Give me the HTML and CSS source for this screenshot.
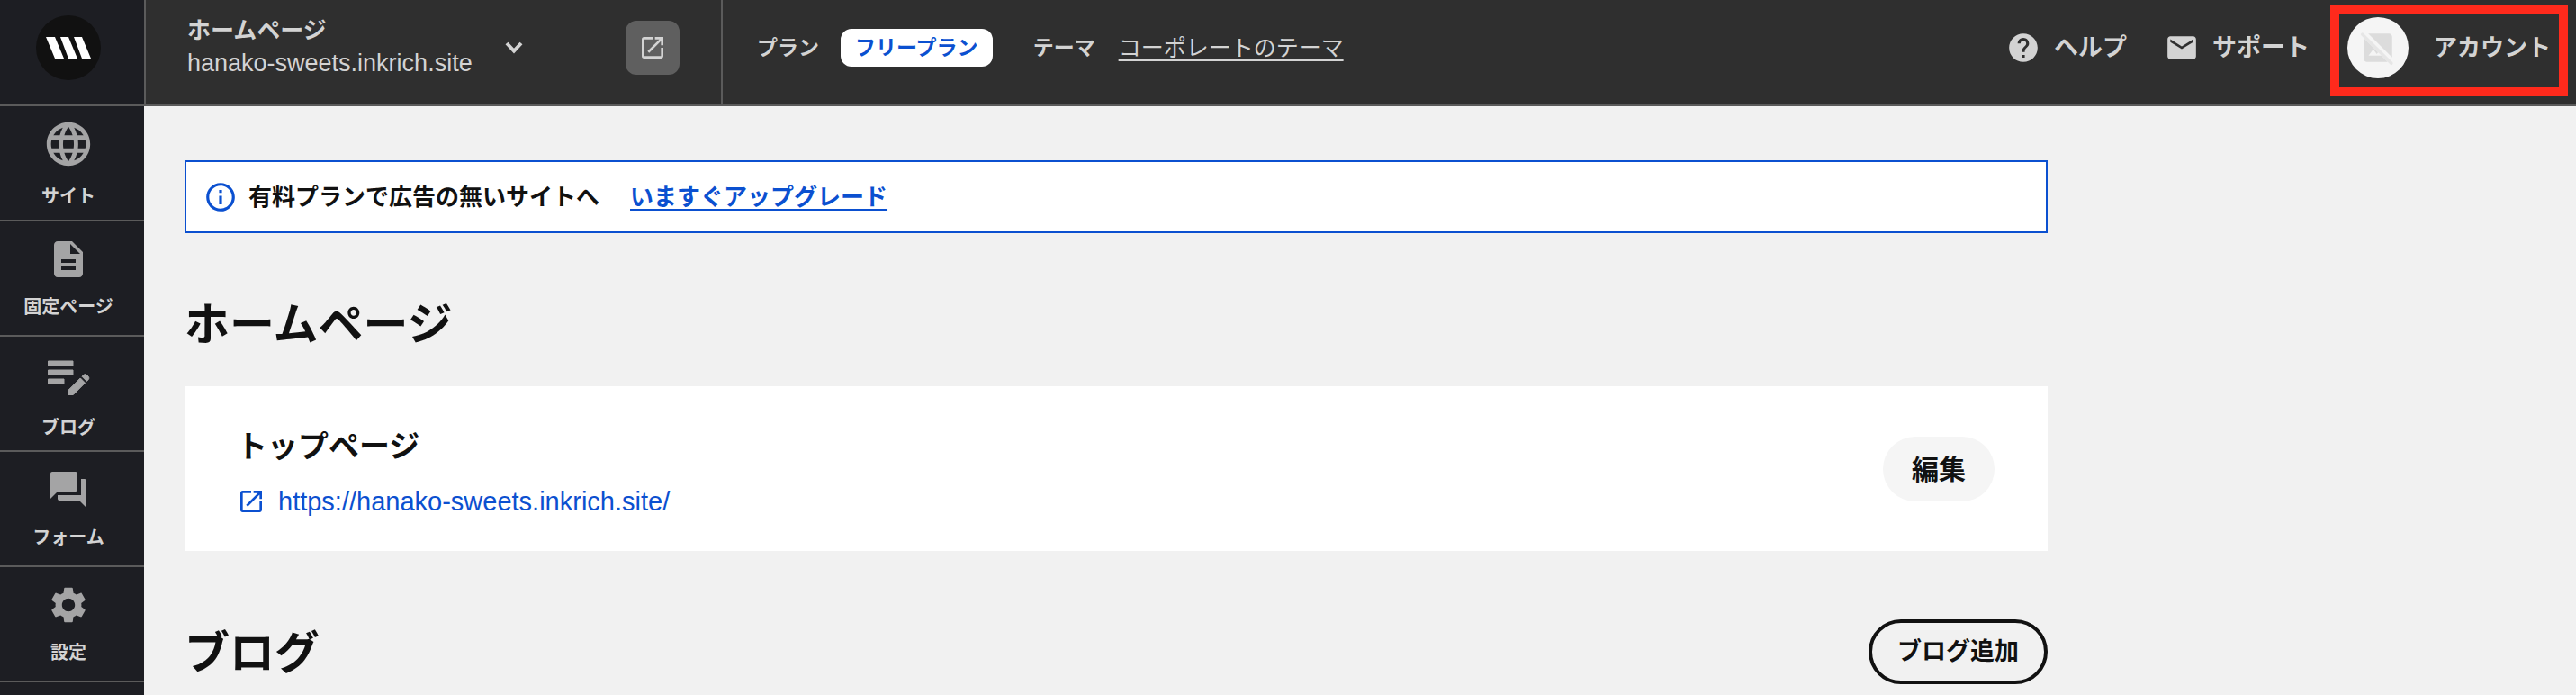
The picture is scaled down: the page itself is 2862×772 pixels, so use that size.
FILE: index.html
```html
<!DOCTYPE html>
<html lang="ja">
<head>
    <meta charset="UTF-8">
    <meta name="viewport" content="width=device-width, initial-scale=1.0">
    <title>ホームページ</title>
    <link rel="stylesheet" href="styles.css">
</head>
<body>
    <div class="layout">
        <nav class="sidebar">
            <a class="logo" href="#" aria-label="ダッシュボード">
                <svg width="72" height="72" viewBox="0 0 72 72">
                    <circle cx="36" cy="36" r="36" fill="#111"/>
                    <path fill="#fff" d="M11 24h10l10 24H21zM27 24h9l10 24H36zM42 24h9l10 24H51z"/>
                </svg>
            </a>
            <a class="nav-item" href="#">
                <svg width="58" height="58" viewBox="0 0 24 24"><path d="M11.99 2C6.47 2 2 6.48 2 12s4.47 10 9.99 10C17.52 22 22 17.52 22 12S17.52 2 11.99 2zm6.93 6h-2.95a15.65 15.65 0 0 0-1.38-3.56A8.03 8.03 0 0 1 18.92 8zM12 4.04c.83 1.2 1.48 2.53 1.91 3.96h-3.82c.43-1.43 1.08-2.76 1.91-3.96zM4.26 14C4.1 13.36 4 12.69 4 12s.1-1.36.26-2h3.38c-.08.66-.14 1.32-.14 2s.06 1.34.14 2H4.26zm.82 2h2.95c.32 1.25.78 2.45 1.38 3.56A7.987 7.987 0 0 1 5.08 16zm2.95-8H5.08a7.987 7.987 0 0 1 4.33-3.56A15.65 15.65 0 0 0 8.03 8zM12 19.96c-.83-1.2-1.48-2.53-1.91-3.96h3.82c-.43 1.43-1.08 2.76-1.91 3.96zM14.34 14H9.66c-.09-.66-.16-1.32-.16-2s.07-1.35.16-2h4.68c.09.65.16 1.32.16 2s-.07 1.34-.16 2zm.25 5.56c.6-1.11 1.06-2.31 1.38-3.56h2.95a8.03 8.03 0 0 1-4.33 3.56zM16.36 14c.08-.66.14-1.32.14-2s-.06-1.34-.14-2h3.38c.16.64.26 1.31.26 2s-.1 1.36-.26 2h-3.38z"/></svg>
                <span>サイト</span>
            </a>
            <a class="nav-item" href="#">
                <svg width="48" height="48" viewBox="0 0 24 24"><path d="M14 2H6c-1.1 0-2 .9-2 2v16c0 1.1.9 2 2 2h12c1.1 0 2-.9 2-2V8l-6-6zm2 16H8v-2h8v2zm0-4H8v-2h8v2zm-3-5V3.5L18.5 9H13z"/></svg>
                <span>固定ページ</span>
            </a>
            <a class="nav-item" href="#">
                <svg width="60" height="60" viewBox="0 0 24 24"><path d="M3 10h11v2H3v-2zm0-2h11V6H3v2zm0 8h7v-2H3v2zm15.01-3.13.71-.71a.996.996 0 0 1 1.41 0l.71.71c.39.39.39 1.02 0 1.41l-.71.71-2.12-2.12zm-.71.71-5.3 5.3V21h2.12l5.3-5.3-2.12-2.12z" stroke="currentColor" stroke-width=".4"/></svg>
                <span>ブログ</span>
            </a>
            <a class="nav-item" href="#">
                <svg width="48" height="48" viewBox="0 0 24 24"><path d="M21 6h-2v9H6v2c0 .55.45 1 1 1h11l4 4V7c0-.55-.45-1-1-1zm-4 6V3c0-.55-.45-1-1-1H3c-.55 0-1 .45-1 1v14l4-4h10c.55 0 1-.45 1-1z"/></svg>
                <span>フォーム</span>
            </a>
            <a class="nav-item" href="#">
                <svg width="48" height="48" viewBox="0 0 24 24"><path d="M19.14 12.94c.04-.3.06-.61.06-.94 0-.32-.02-.64-.07-.94l2.03-1.58c.18-.14.23-.41.12-.61l-1.92-3.32c-.12-.22-.37-.29-.59-.22l-2.39.96c-.5-.38-1.03-.7-1.62-.94l-.36-2.54c-.04-.24-.24-.41-.48-.41h-3.84c-.24 0-.43.17-.47.41l-.36 2.54c-.59.24-1.13.57-1.62.94l-2.39-.96c-.22-.08-.47 0-.59.22L2.74 8.87c-.12.21-.08.47.12.61l2.03 1.58c-.05.3-.09.63-.09.94s.02.64.07.94l-2.03 1.58c-.18.14-.23.41-.12.61l1.92 3.32c.12.22.37.29.59.22l2.39-.96c.5.38 1.03.7 1.62.94l.36 2.54c.05.24.24.41.48.41h3.84c.24 0 .44-.17.47-.41l.36-2.54c.59-.24 1.13-.56 1.62-.94l2.39.96c.22.08.47 0 .59-.22l1.92-3.32c.12-.22.07-.47-.12-.61l-2.01-1.58zM12 15.6c-1.98 0-3.6-1.62-3.6-3.6s1.62-3.6 3.6-3.6 3.6 1.62 3.6 3.6-1.62 3.6-3.6 3.6z"/></svg>
                <span>設定</span>
            </a>
        </nav>

        <div class="page">
            <header class="topbar">
                <div class="site">
                    <button class="site-select" type="button">
                        <span class="site-text">
                            <span class="site-name">ホームページ</span>
                            <span class="site-url">hanako-sweets.inkrich.site</span>
                        </span>
                        <svg width="20" height="14" viewBox="0 0 20 14"><path d="M2 2l8 8.5L18 2" stroke="currentColor" stroke-width="4"/></svg>
                    </button>
                    <button class="open-site" type="button" aria-label="サイトを開く">
                        <svg width="32" height="32" viewBox="0 0 24 24"><path d="M19 19H5V5h7V3H5a2 2 0 0 0-2 2v14a2 2 0 0 0 2 2h14c1.1 0 2-.9 2-2v-7h-2v7zM14 3v2h3.59l-9.83 9.83 1.41 1.41L19 6.41V10h2V3h-7z"/></svg>
                    </button>
                </div>
                <div class="plan">
                    <span class="plan-label">プラン</span>
                    <a class="plan-badge" href="#">フリープラン</a>
                    <span class="plan-label">テーマ</span>
                    <a class="theme-link" href="#">コーポレートのテーマ</a>
                </div>
                <div class="tools">
                    <a class="tool" href="#">
                        <svg width="38" height="38" viewBox="0 0 24 24"><path d="M12 2C6.48 2 2 6.48 2 12s4.48 10 10 10 10-4.48 10-10S17.52 2 12 2zm1 17h-2v-2h2v2zm2.07-7.75-.9.92C13.45 12.9 13 13.5 13 15h-2v-.5c0-1.1.45-2.1 1.17-2.83l1.24-1.26c.37-.36.59-.86.59-1.41 0-1.1-.9-2-2-2s-2 .9-2 2H8c0-2.21 1.79-4 4-4s4 1.79 4 4c0 .88-.36 1.68-.93 2.25z"/></svg>
                        <span class="tool-label">ヘルプ</span>
                    </a>
                    <a class="tool" href="#">
                        <svg width="38" height="38" viewBox="0 0 24 24"><path d="M20 4H4c-1.1 0-1.99.9-1.99 2L2 18c0 1.1.9 2 2 2h16c1.1 0 2-.9 2-2V6c0-1.1-.9-2-2-2zm0 4-8 5-8-5V6l8 5 8-5v2z"/></svg>
                        <span class="tool-label">サポート</span>
                    </a>
                    <a class="account" href="#">
                        <span class="avatar">
                            <svg width="42" height="42" viewBox="0 0 24 24">
                                <path d="M21 5c0-1.1-.9-2-2-2H5.83L21 18.17V5zM3 5.83V19c0 1.1.9 2 2 2h13.17L3 5.83zM6 17l3-4 2.25 3 .82-1.1 2.1 2.1H6z"/>
                                <path d="M2.1 3.5l18.4 18.4" stroke="#e6e6e6" stroke-width="2" stroke-linecap="round"/>
                            </svg>
                        </span>
                        <span class="tool-label">アカウント</span>
                    </a>
                </div>
            </header>

            <main class="content">
                <div class="notice">
                    <svg width="38" height="38" viewBox="0 0 24 24"><path d="M11 7h2v2h-2V7zm0 4h2v6h-2v-6zm1-9C6.48 2 2 6.48 2 12s4.48 10 10 10 10-4.48 10-10S17.52 2 12 2zm0 18c-4.41 0-8-3.59-8-8s3.59-8 8-8 8 3.59 8 8-3.59 8-8 8z"/></svg>
                    <span>有料プランで広告の無いサイトへ</span>
                    <a href="#">いますぐアップグレード</a>
                </div>

                <div class="section-head">
                    <h1>ホームページ</h1>
                </div>
                <section class="card">
                    <div>
                        <h2>トップページ</h2>
                        <a class="card-link" href="#">
                            <svg width="32" height="32" viewBox="0 0 24 24"><path d="M19 19H5V5h7V3H5a2 2 0 0 0-2 2v14a2 2 0 0 0 2 2h14c1.1 0 2-.9 2-2v-7h-2v7zM14 3v2h3.59l-9.83 9.83 1.41 1.41L19 6.41V10h2V3h-7z"/></svg>
                            <span>https://hanako-sweets.inkrich.site/</span>
                        </a>
                    </div>
                    <button class="btn" type="button">編集</button>
                </section>

                <div class="section-head">
                    <h1>ブログ</h1>
                    <button class="btn btn-outline" type="button">ブログ追加</button>
                </div>
            </main>
        </div>
    </div>
</body>
</html>
```

FILE: styles.css
```css
* {
    box-sizing: border-box;
}
body {
    margin: 0;
    font-family: "Noto Sans CJK JP", sans-serif;
    font-size: 26px;
    line-height: 38px;
    color: #111;
    background: #f1f1f1;
}
h1, h2 {
    margin: 0;
}
a {
    color: inherit;
    text-decoration: none;
}
button {
    padding: 0;
    border: 0;
    font-family: inherit;
    font-size: inherit;
    line-height: inherit;
    color: inherit;
    background: none;
    cursor: pointer;
}
svg {
    display: block;
    flex-shrink: 0;
    fill: currentColor;
}
.layout {
    display: flex;
    min-height: 100vh;
}

/* Sidebar */
.sidebar {
    width: 160px;
    flex-shrink: 0;
    background: #1d1e23;
}
.logo {
    display: flex;
    justify-content: center;
    height: 118px;
    padding: 17px 8px 0 0;
    border-bottom: 2px solid #5b5b5b;
}
.nav-item {
    display: flex;
    flex-direction: column;
    align-items: center;
    justify-content: center;
    height: 128px;
    padding-right: 8px;
    border-bottom: 2px solid #5b5b5b;
    color: #a4a4a5;
}
.nav-item span {
    margin-top: 14px;
    font-size: 20px;
    font-weight: 700;
    line-height: 28px;
    color: #d3d3d3;
}

/* Top bar */
.page {
    flex: 1;
    min-width: 0;
}
.topbar {
    display: flex;
    height: 118px;
    border-bottom: 2px solid #5b5b5b;
    color: #d3d3d3;
    background: #2f2f2f;
}
.site, .plan, .tools {
    display: flex;
    align-items: center;
    padding-bottom: 10px;
}
.site {
    justify-content: space-between;
    width: 643px;
    padding-left: 46px;
    padding-right: 46px;
    border: solid #5b5b5b;
    border-width: 0 2px;
}
.site-select {
    display: flex;
    align-items: center;
    gap: 36px;
    text-align: left;
}
.site-select path {
    fill: none;
}
.site-text {
    padding-bottom: 4px;
}
.site-text span {
    display: block;
}
.site-name {
    font-weight: 700;
}
.site-url, .card-link {
    font-family: "Liberation Sans", Arial, sans-serif;
}
.site-url {
    font-size: 27px;
}
.open-site {
    display: flex;
    align-items: center;
    justify-content: center;
    width: 60px;
    height: 60px;
    border-radius: 12px;
    background: #5f5f5f;
}
.plan {
    padding-left: 38px;
    white-space: nowrap;
}
.plan-label, .plan-badge {
    font-size: 23px;
    font-weight: 700;
}
.plan-label, .theme-link, .tool-label {
    padding-bottom: 4px;
}
.plan-badge {
    margin: 0 45px 0 24px;
    padding: 0 16px 4px;
    border-radius: 12px;
    color: #0b50d0;
    background: #fff;
}
.theme-link {
    margin-left: 26px;
    font-size: 25px;
    text-decoration: underline;
    text-underline-offset: 4px;
}
.tools {
    gap: 42px;
    margin-left: auto;
    padding-right: 28px;
    font-size: 27px;
    font-weight: 700;
    white-space: nowrap;
}
.tool {
    display: flex;
    align-items: center;
    gap: 15px;
}
.account {
    position: relative;
    display: flex;
    align-items: center;
    gap: 28px;
    font-size: 26px;
}
.account::after {
    content: "";
    position: absolute;
    inset: -13px -19px -20px -19px;
    border: 10px solid #ff2a1c;
}
.avatar {
    display: flex;
    align-items: center;
    justify-content: center;
    width: 68px;
    height: 68px;
    border-radius: 50%;
    color: #dcdcdc;
    background: #f5f5f5;
}

/* Content */
.content {
    max-width: 2160px;
    padding: 60px 45px 0;
}
.notice {
    display: flex;
    align-items: center;
    height: 81px;
    padding-left: 19px;
    border: 2px solid #0b50d0;
    font-weight: 700;
    background: #fff;
}
.notice svg {
    color: #0b50d0;
}
.notice span {
    margin: 0 34px 0 12px;
    padding-bottom: 4px;
}
.notice a {
    padding-bottom: 4px;
    color: #0b50d0;
    text-decoration: underline 2px;
    text-underline-offset: 4px;
}
.section-head {
    display: flex;
    align-items: center;
    justify-content: space-between;
    margin: 64px 0 34px;
}
.section-head h1 {
    padding-bottom: 6px;
    font-size: 50px;
    line-height: 66px;
}
.card {
    display: flex;
    align-items: center;
    justify-content: space-between;
    margin-bottom: 76px;
    padding: 36px 59px 36px 58px;
    background: #fff;
}
.card h2 {
    font-size: 34px;
    line-height: 58px;
}
.card-link {
    display: flex;
    align-items: center;
    gap: 14px;
    margin-top: 15px;
    font-size: 29px;
    color: #0b50d0;
}
.btn {
    height: 72px;
    padding: 0 32px 4px;
    border-radius: 36px;
    font-size: 30px;
    font-weight: 700;
    background: #f5f5f5;
}
.btn-outline {
    padding: 0 28px 4px;
    border: 4px solid #111;
    font-size: 27px;
    background: none;
}
```
